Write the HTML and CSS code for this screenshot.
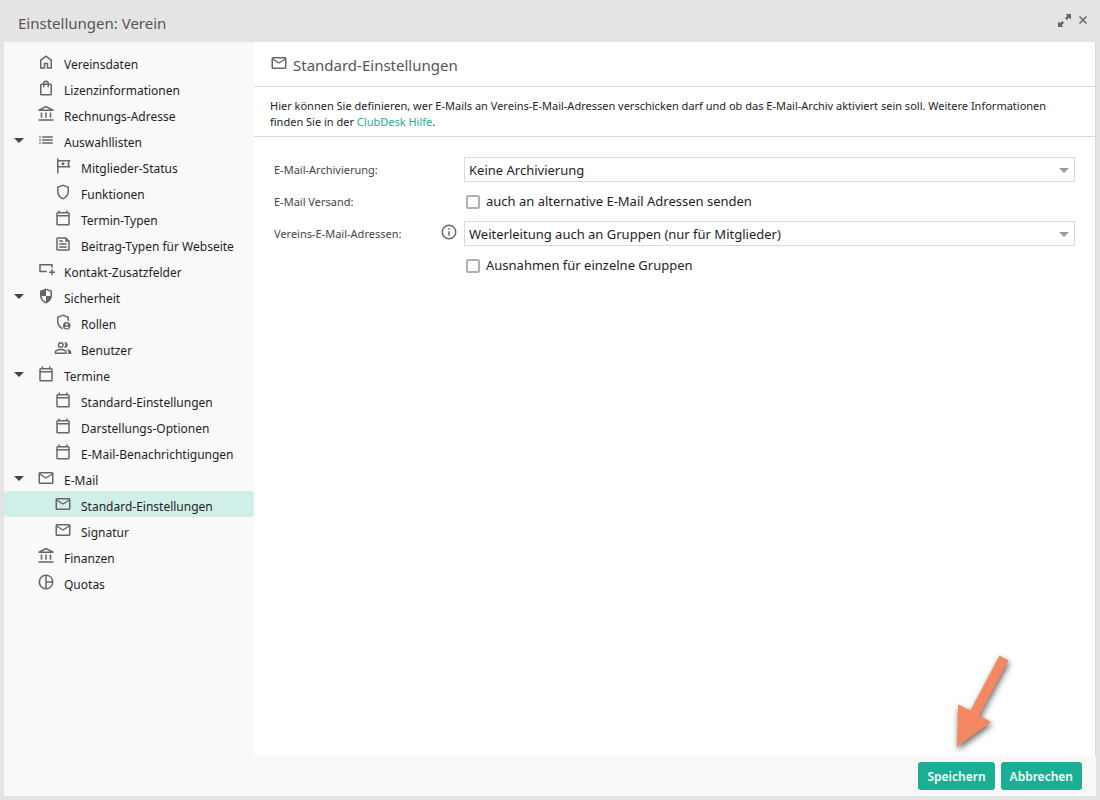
FILE: index.html
```html
<!DOCTYPE html>
<html lang="de">
<head>
    <meta charset="UTF-8">
    <meta name="viewport" content="width=device-width, initial-scale=1.0">
    <title>Einstellungen: Verein</title>
    <link rel="stylesheet" href="styles.css">
</head>
<body>
    <!-- icon sprite -->
    <svg class="sprite" aria-hidden="true">
        <symbol id="i-home" viewBox="0 0 24 24"><path d="M6 19h3v-6h6v6h3v-9l-6-4.5L6 10Zm-2 2V9l8-6 8 6v12h-7v-6h-2v6Z"/></symbol>
        <symbol id="i-bag" viewBox="0 0 24 24"><path d="M6 22a2 2 0 0 1-2-2V8a2 2 0 0 1 2-2h2a4 4 0 0 1 8 0h2a2 2 0 0 1 2 2v12a2 2 0 0 1-2 2ZM6 20h12V8h-2v3h-2V8h-4v3H8V8H6Zm4-14h4a2 2 0 0 0-4 0Z" fill-rule="evenodd"/></symbol>
        <symbol id="i-bank" viewBox="0 0 24 24"><path d="M5 17v-7h2v7Zm6 0v-7h2v7Zm-9 4v-2h20v2Zm15-4v-7h2v7ZM2 8V6l10-5 10 5v2Zm4.500-2h11L12 3.250Z" fill-rule="evenodd"/></symbol>
        <symbol id="i-list" viewBox="0 0 24 24"><path d="M7 9V7h14v2Zm0 4v-2h14v2Zm0 4v-2h14v2ZM3 9V7h2v2Zm0 4v-2h2v2Zm0 4v-2h2v2Z"/></symbol>
        <symbol id="i-flag" viewBox="0 0 24 24"><path d="M4 22V2h2v2h16l-2 5 2 5H6v8ZM6 12h13l-1.200-3L19 6H6Z" fill-rule="evenodd"/><circle cx="12" cy="9" r="2"/></symbol>
        <symbol id="i-shield" viewBox="0 0 24 24"><path d="M12 2 20 5v6.100c0 5-3.400 9.700-8 10.900-4.600-1.200-8-5.900-8-10.900V5Zm0 2.100L6 6.400v4.700c0 4 2.500 7.700 6 8.800 3.500-1.100 6-4.800 6-8.800V6.400Z" fill-rule="evenodd"/></symbol>
        <symbol id="i-calendar" viewBox="0 0 24 24"><path d="M5 22a2 2 0 0 1-2-2V6a2 2 0 0 1 2-2h1V2h2v2h8V2h2v2h1a2 2 0 0 1 2 2v14a2 2 0 0 1-2 2ZM5 20h14V10H5ZM5 8h14V6H5Z" fill-rule="evenodd"/></symbol>
        <symbol id="i-doc" viewBox="0 0 24 24"><path d="M5 21a2 2 0 0 1-2-2V5a2 2 0 0 1 2-2h11l5 5v11a2 2 0 0 1-2 2ZM5 19h14V9h-4V5H5ZM7 17v-2h10v2ZM7 9V7h5v2ZM7 13v-2h10v2Z" fill-rule="evenodd"/></symbol>
        <symbol id="i-field" viewBox="0 0 24 24"><path d="M3 15V4h18v5h-2V6H5v7h8v2ZM19 19v-3h-3v-2h3v-3h2v3h3v2h-3v3Z" fill-rule="evenodd"/></symbol>
        <symbol id="i-security" viewBox="0 0 24 24"><path d="M12 2 20 5v6.100c0 5-3.400 9.700-8 10.900-4.600-1.200-8-5.900-8-10.900V5Zm0 2.100V12H6.100c.4 3.700 2.700 6.800 5.900 7.900V12h5.900c.1-.4.1-.7.1-1V6.400Z" fill-rule="evenodd"/></symbol>
        <symbol id="i-role" viewBox="0 0 24 24"><path d="M12 22c-4.600-1.200-8-5.900-8-10.900V5l8-3 8 3v5.700l-2-.5V6.400l-6-2.300-6 2.300v4.700c0 3.700 2.100 7 5.200 8.500Z"/><path d="M17 12a5 5 0 1 1 0 10 5 5 0 0 1 0-10Zm0 1.700a1.500 1.500 0 1 0 0 3 1.500 1.500 0 0 0 0-3Zm0 4.200c-1.100 0-2.100.4-2.800 1.100.6.900 1.600 1.500 2.800 1.500s2.200-.6 2.800-1.500a4 4 0 0 0-2.800-1.100Z" fill-rule="evenodd"/></symbol>
        <symbol id="i-users" viewBox="0 0 24 24"><path d="M1 20v-2.800c0-1.100.6-2.100 1.600-2.600C4.500 13.600 6.700 13 9 13s4.500.6 6.400 1.600c1 .5 1.600 1.500 1.600 2.600V20Zm2-2h12v-.8c0-.4-.2-.7-.5-.9C12.900 15.500 11 15 9 15s-3.900.5-5.500 1.300c-.3.200-.5.500-.5.900ZM9 12a4 4 0 1 1 0-8 4 4 0 0 1 0 8Zm0-2a2 2 0 1 0 0-4 2 2 0 0 0 0 4Z" fill-rule="evenodd"/><path d="M19 20v-3c0-1.500-.8-2.800-2.200-3.700 1.500.2 2.900.6 4.200 1.300s2 1.500 2 2.400v3ZM13.500 11.900a6 6 0 0 0 0-7.800A4 4 0 1 1 13.500 11.900Z"/></symbol>
        <symbol id="i-mail" viewBox="0 0 24 24"><path d="M4 20a2 2 0 0 1-2-2V6a2 2 0 0 1 2-2h16a2 2 0 0 1 2 2v12a2 2 0 0 1-2 2Zm8-7L4 8v10h16V8Zm0-2 8-5H4ZM4 8V6v12Z" fill-rule="evenodd"/></symbol>
        <symbol id="i-quota" viewBox="0 0 24 24"><path d="M12 2a10 10 0 1 1 0 20 10 10 0 0 1 0-20Zm-1 2.100a8 8 0 0 0 0 15.800Zm2 0V11h6.900A8 8 0 0 0 13 4.100ZM13 13v6.900a8 8 0 0 0 6.900-6.900Z" fill-rule="evenodd"/></symbol>
        <symbol id="i-info" viewBox="0 0 24 24"><path d="M11 17h2v-6h-2Zm0-8h2V7h-2Zm1-7a10 10 0 1 1 0 20 10 10 0 0 1 0-20Zm0 2a8 8 0 1 0 0 16 8 8 0 0 0 0-16Z" fill-rule="evenodd"/></symbol>
    </svg>

    <div class="window">
        <header class="window-header">
            <h1>Einstellungen: Verein</h1>
            <button class="window-button" aria-label="Maximieren">
                <svg width="13" height="13" viewBox="0 0 14 14"><path d="M8 0h6v6l-2-2-2.500 2.500-2-2L10 2ZM6 14H0V8l2 2 2.500-2.500 2 2L4 12Z"/></svg>
            </button>
            <button class="window-button" aria-label="Schliessen">
                <svg width="8" height="8" viewBox="0 0 8 8"><path d="M.5.5l7 7M7.500.5l-7 7" stroke="#666" stroke-width="1.500"/></svg>
            </button>
        </header>

        <div class="window-body">
            <nav class="sidebar">
                <ul class="tree">
                    <li><a href="#"><svg class="icon"><use href="#i-home"/></svg>Vereinsdaten</a></li>
                    <li><a href="#"><svg class="icon"><use href="#i-bag"/></svg>Lizenzinformationen</a></li>
                    <li><a href="#"><svg class="icon"><use href="#i-bank"/></svg>Rechnungs-Adresse</a></li>
                    <li class="open"><a href="#"><svg class="icon"><use href="#i-list"/></svg>Auswahllisten</a>
                        <ul>
                            <li><a href="#"><svg class="icon"><use href="#i-flag"/></svg>Mitglieder-Status</a></li>
                            <li><a href="#"><svg class="icon"><use href="#i-shield"/></svg>Funktionen</a></li>
                            <li><a href="#"><svg class="icon"><use href="#i-calendar"/></svg>Termin-Typen</a></li>
                            <li><a href="#"><svg class="icon"><use href="#i-doc"/></svg>Beitrag-Typen für Webseite</a></li>
                        </ul>
                    </li>
                    <li><a href="#"><svg class="icon"><use href="#i-field"/></svg>Kontakt-Zusatzfelder</a></li>
                    <li class="open"><a href="#"><svg class="icon"><use href="#i-security"/></svg>Sicherheit</a>
                        <ul>
                            <li><a href="#"><svg class="icon"><use href="#i-role"/></svg>Rollen</a></li>
                            <li><a href="#"><svg class="icon"><use href="#i-users"/></svg>Benutzer</a></li>
                        </ul>
                    </li>
                    <li class="open"><a href="#"><svg class="icon"><use href="#i-calendar"/></svg>Termine</a>
                        <ul>
                            <li><a href="#"><svg class="icon"><use href="#i-calendar"/></svg>Standard-Einstellungen</a></li>
                            <li><a href="#"><svg class="icon"><use href="#i-calendar"/></svg>Darstellungs-Optionen</a></li>
                            <li><a href="#"><svg class="icon"><use href="#i-calendar"/></svg>E-Mail-Benachrichtigungen</a></li>
                        </ul>
                    </li>
                    <li class="open"><a href="#"><svg class="icon"><use href="#i-mail"/></svg>E-Mail</a>
                        <ul>
                            <li><a href="#" class="active"><svg class="icon"><use href="#i-mail"/></svg>Standard-Einstellungen</a></li>
                            <li><a href="#"><svg class="icon"><use href="#i-mail"/></svg>Signatur</a></li>
                        </ul>
                    </li>
                    <li><a href="#"><svg class="icon"><use href="#i-bank"/></svg>Finanzen</a></li>
                    <li><a href="#"><svg class="icon"><use href="#i-quota"/></svg>Quotas</a></li>
                </ul>
            </nav>

            <main class="content">
                <h2><svg class="icon"><use href="#i-mail"/></svg>Standard-Einstellungen</h2>
                <p class="intro">Hier können Sie definieren, wer E-Mails an Vereins-E-Mail-Adressen verschicken darf und ob das E-Mail-Archiv aktiviert sein soll. Weitere Informationen finden Sie in der <a href="#">ClubDesk Hilfe</a>.</p>

                <form class="settings" id="settings">
                    <label class="name" for="archive">E-Mail-Archivierung:</label>
                    <div class="select-box">
                        <select id="archive"><option>Keine Archivierung</option></select>
                    </div>

                    <span class="name">E-Mail Versand:</span>
                    <label class="check"><input type="checkbox">auch an alternative E-Mail Adressen senden</label>

                    <div class="name-info">
                        <label class="name" for="addresses">Vereins-E-Mail-Adressen:</label>
                        <svg class="icon"><use href="#i-info"/></svg>
                    </div>
                    <div class="select-box">
                        <select id="addresses"><option>Weiterleitung auch an Gruppen (nur für Mitglieder)</option></select>
                    </div>

                    <label class="check second"><input type="checkbox">Ausnahmen für einzelne Gruppen</label>
                </form>
            </main>
        </div>

        <footer class="window-footer">
            <svg class="pointer" width="64" height="104" viewBox="0 0 64 104"><path d="M7 97 8 54.500 20.500 60.500 49.500 5.500 58.500 10.500 29 65.500 41 72Z"/></svg>
            <button class="btn" form="settings">Speichern</button>
            <button class="btn" type="button">Abbrechen</button>
        </footer>
    </div>
</body>
</html>
```
FILE: styles.css
```css
* {
    box-sizing: border-box;
}
body {
    margin: 0;
    background: #e4e4e4;
    color: #1e1e1e;
    font-family: "Noto Sans", "Open Sans", sans-serif;
    font-size: 12px;
}
button, select {
    font-family: inherit;
}
.sprite {
    display: none;
}
.icon {
    width: 18px;
    height: 18px;
    flex: none;
    fill: #666;
}
.window {
    display: flex;
    flex-direction: column;
    min-height: 100vh;
    padding: 0 4px 4px;
}
.window-header {
    display: flex;
    align-items: center;
    height: 42px;
    padding: 0 9px 0 14px;
}
h1 {
    flex: 1;
    margin: 4px 0 0;
    font-size: 15px;
    font-weight: 400;
    color: #555;
}
.window-button {
    display: flex;
    padding: 0;
    margin: 0 0 2px 8px;
    border: none;
    background: none;
    fill: #666;
    cursor: pointer;
}
.window-body {
    display: flex;
    flex: 1;
}

/* sidebar */
.sidebar {
    width: 250px;
    flex: none;
    padding-top: 7px;
    background: #f9f9f9;
}
.tree, .tree ul {
    margin: 0;
    padding: 0;
    list-style: none;
}
.tree a {
    display: flex;
    align-items: center;
    height: 26px;
    padding: 4px 0 0 33px;
    border-radius: 4px;
    color: #1e1e1e;
    text-decoration: none;
}
.tree ul a {
    padding-left: 50px;
}
.tree a .icon {
    margin: 0 9px 4px 0;
}
.tree .open > a {
    padding-left: 10px;
}
.tree .open > a::before {
    content: "";
    margin: 0 13px 4px 0;
    border: solid transparent;
    border-width: 5px 5px 0;
    border-top-color: #444;
}
.tree a.active {
    background: #d0efe9;
}

/* content */
.content {
    flex: 1;
    background: #fff;
    border-right: 1px solid #d9d9d9;
}
h2 {
    display: flex;
    align-items: center;
    height: 45px;
    margin: 0;
    padding: 2px 16px 0;
    border-bottom: 1px solid #d9d9d9;
    font-size: 15px;
    font-weight: 400;
    color: #555;
}
h2 .icon {
    margin: 0 5px 4px 0;
}
.intro {
    margin: 0;
    padding: 11px 20px 6px 16px;
    border-bottom: 1px solid #d9d9d9;
    font-size: 11px;
    line-height: 16px;
}
.intro a {
    color: #1cae94;
    text-decoration: none;
}
.settings {
    display: grid;
    grid-template-columns: 190px 1fr;
    grid-auto-rows: 32px;
    align-items: center;
    padding: 16px 20px;
}
.name {
    color: #444;
    font-size: 11px;
}
.name-info {
    display: flex;
    align-items: center;
    justify-content: space-between;
    padding-right: 6px;
}
.name-info .icon {
    margin-bottom: 2px;
}
.select-box {
    position: relative;
}
.select-box::after {
    content: "";
    position: absolute;
    top: 11px;
    right: 6px;
    border: solid transparent;
    border-width: 5px 5px 0;
    border-top-color: #999;
    pointer-events: none;
}
select {
    display: block;
    width: 100%;
    height: 25px;
    padding: 2px 20px 0 4px;
    border: 1px solid #d9d9d9;
    border-radius: 0;
    background: #fff;
    color: #1e1e1e;
    font-size: 13px;
    appearance: none;
}
.check {
    display: flex;
    align-items: center;
    gap: 6px;
    padding-left: 2px;
    font-size: 13px;
}
.check.second {
    grid-column: 2;
}
.check input {
    appearance: none;
    width: 14px;
    height: 14px;
    margin: 2px 0 0;
    border: 2px solid #b0b0b0;
    border-radius: 2px;
    background: #fff;
}

/* footer */
.window-footer {
    position: relative;
    display: flex;
    justify-content: flex-end;
    gap: 6px;
    padding: 6px 14px;
    background: #f9f9f9;
}
.btn {
    height: 28px;
    padding: 1px 9px 0;
    border: none;
    border-radius: 3px;
    background: #1cae94;
    color: #fff;
    font-size: 12px;
    font-weight: 600;
    cursor: pointer;
}
.pointer {
    position: absolute;
    right: 82px;
    bottom: 42px;
    fill: #f58762;
    filter: drop-shadow(1px 3px 3px rgba(0, 0, 0, 0.6));
    pointer-events: none;
}
```
